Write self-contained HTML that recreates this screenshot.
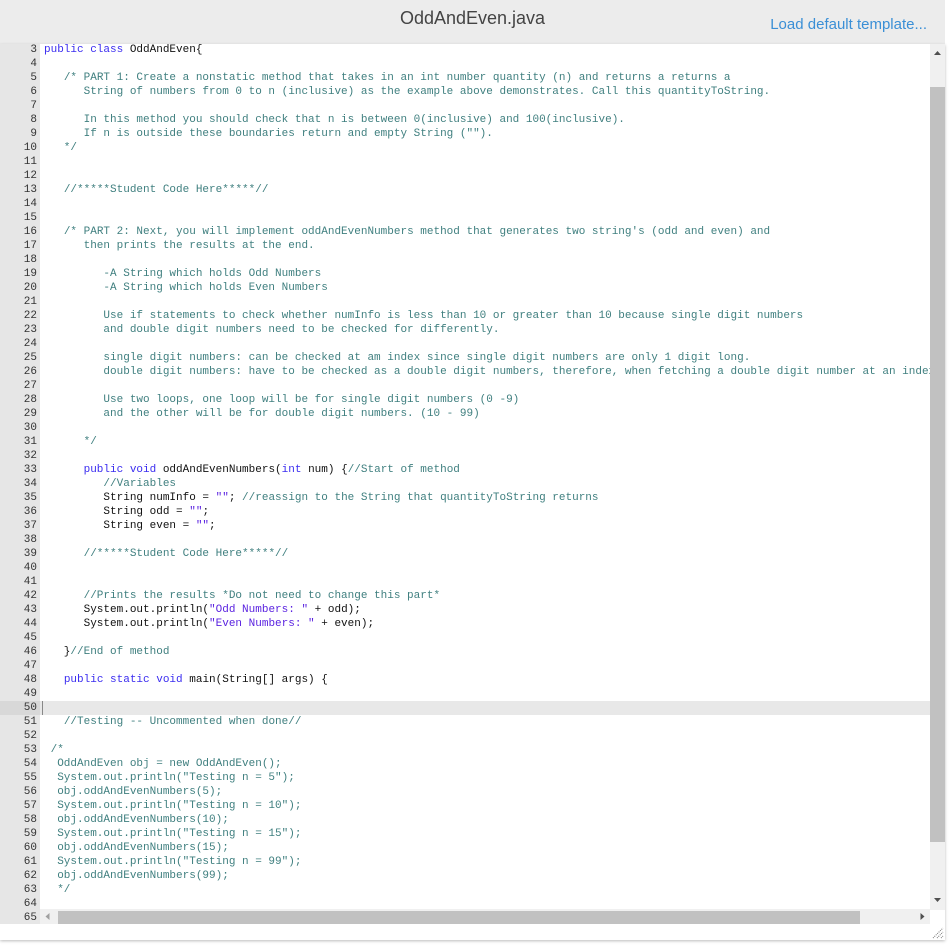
<!DOCTYPE html>
<html><head><meta charset="utf-8"><style>
html,body{margin:0;padding:0;background:#fff;width:949px;height:945px;overflow:hidden}
.hdr{position:absolute;left:0;top:0;width:945px;height:44px;background:#ececec}
.title{position:absolute;left:0;width:945px;top:8px;text-align:center;font:18px "Liberation Sans",sans-serif;color:#444}
.load{position:absolute;right:18px;top:16px;font:15px "Liberation Sans",sans-serif;color:#3a8fd6}
.ed{position:absolute;left:0;top:44px;width:945px;height:896px;background:#fff;box-shadow:0 1px 3px #bbb;overflow:hidden}
.gut{position:absolute;left:0;top:0;width:40px;height:880px;background:#e6e6e6}
.hl{position:absolute;left:40px;top:657px;width:890px;height:14px;background:#e8e8e8}
.hlg{position:absolute;left:0;top:657px;width:40px;height:14px;background:#d8d8d8}
pre{margin:0;position:absolute;top:-1px;font:11px/14px "Liberation Mono",monospace}
.num{left:0;width:37px;text-align:right;color:#333}
.code{left:44px;color:#111}
.k{color:#3a2cf0}.c{color:#3f7f7f}.s{color:#5a22e0}
.vs{position:absolute;left:930px;top:0;width:15px;height:866px;background:#f0f0f0}
.vt{position:absolute;left:930px;top:43px;width:15px;height:755px;background:#c1c1c1}
.hs{position:absolute;left:40px;top:865px;width:890px;height:15px;background:#f0f0f0}
.ht{position:absolute;left:58px;top:867px;width:802px;height:13px;background:#c1c1c1}
.cursor{position:absolute;left:42px;top:657px;width:1px;height:14px;background:#888}
</style></head><body>
<div class="hdr"><div class="title">OddAndEven.java</div><div class="load">Load default template...</div></div>
<div class="ed">
<div class="gut"></div><div class="hlg"></div><div class="hl"></div><div class="cursor"></div>
<pre class="num">3
4
5
6
7
8
9
10
11
12
13
14
15
16
17
18
19
20
21
22
23
24
25
26
27
28
29
30
31
32
33
34
35
36
37
38
39
40
41
42
43
44
45
46
47
48
49
50
51
52
53
54
55
56
57
58
59
60
61
62
63
64
65</pre>
<pre class="code"><span class="k">public class</span> OddAndEven{

   <span class="c">/* PART 1: Create a nonstatic method that takes in an int number quantity (n) and returns a returns a
      String of numbers from 0 to n (inclusive) as the example above demonstrates. Call this quantityToString.

      In this method you should check that n is between 0(inclusive) and 100(inclusive).
      If n is outside these boundaries return and empty String ("").
   */</span>


   <span class="c">//*****Student Code Here*****//</span>


   <span class="c">/* PART 2: Next, you will implement oddAndEvenNumbers method that generates two string's (odd and even) and
      then prints the results at the end.

         -A String which holds Odd Numbers
         -A String which holds Even Numbers

         Use if statements to check whether numInfo is less than 10 or greater than 10 because single digit numbers
         and double digit numbers need to be checked for differently.

         single digit numbers: can be checked at am index since single digit numbers are only 1 digit long.
         double digit numbers: have to be checked as a double digit numbers, therefore, when fetching a double digit number at an index

         Use two loops, one loop will be for single digit numbers (0 -9)
         and the other will be for double digit numbers. (10 - 99)

      */</span>

      <span class="k">public void</span> oddAndEvenNumbers(<span class="k">int</span> num) {<span class="c">//Start of method</span>
         <span class="c">//Variables</span>
         String numInfo = <span class="s">""</span>; <span class="c">//reassign to the String that quantityToString returns</span>
         String odd = <span class="s">""</span>;
         String even = <span class="s">""</span>;

      <span class="c">//*****Student Code Here*****//</span>


      <span class="c">//Prints the results *Do not need to change this part*</span>
      System.out.println(<span class="s">"Odd Numbers: "</span> + odd);
      System.out.println(<span class="s">"Even Numbers: "</span> + even);

   }<span class="c">//End of method</span>

   <span class="k">public static void</span> main(String[] args) {


   <span class="c">//Testing -- Uncommented when done//</span>

 <span class="c">/*
  OddAndEven obj = new OddAndEven();
  System.out.println("Testing n = 5");
  obj.oddAndEvenNumbers(5);
  System.out.println("Testing n = 10");
  obj.oddAndEvenNumbers(10);
  System.out.println("Testing n = 15");
  obj.oddAndEvenNumbers(15);
  System.out.println("Testing n = 99");
  obj.oddAndEvenNumbers(99);
  */</span>

</pre>
<div class="vs"></div><div class="vt"></div>
<svg style="position:absolute;left:930px;top:4px" width="15" height="10"><path d="M4 7 L7.5 3 L11 7Z" fill="#505050"/></svg>
<svg style="position:absolute;left:930px;top:851px" width="15" height="10"><path d="M4 3 L7.5 7 L11 3Z" fill="#505050"/></svg>
<div class="hs"></div><div class="ht"></div>
<svg style="position:absolute;left:40px;top:865px" width="15" height="15"><path d="M9.5 4 L5.5 7.5 L9.5 11Z" fill="#a0a0a0"/></svg>
<svg style="position:absolute;left:915px;top:865px" width="15" height="15"><path d="M5.5 4 L9.5 7.5 L5.5 11Z" fill="#505050"/></svg>
<svg style="position:absolute;left:930px;top:881px" width="15" height="15"><path d="M3 13 L13 3 M7 13 L13 7 M11 13 L13 11" stroke="#777" stroke-width="1" stroke-dasharray="1 1"/></svg>
</div>
</body></html>
